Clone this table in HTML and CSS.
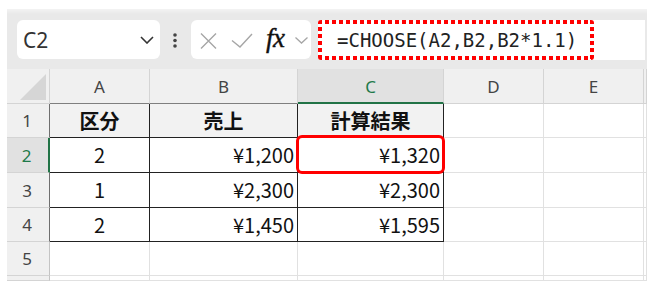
FILE: index.html
```html
<!DOCTYPE html>
<html lang="ja">
<head>
<meta charset="utf-8">
<title>CHOOSE</title>
<link rel="stylesheet" href="styles.css">
</head>
<body>
<div class="app">
  <div class="toolbar">
    <div class="namebox">
      <span class="name">C2</span>
      <svg class="nb-chev" width="14" height="8" viewBox="0 0 14 8"><path d="M1 1 L7 7 L13 1" fill="none" stroke="#333" stroke-width="1.6"/></svg>
    </div>
    <svg class="dots" width="4" height="15" viewBox="0 0 4 15"><circle cx="2" cy="2" r="1.8" fill="#444"/><circle cx="2" cy="7.5" r="1.8" fill="#444"/><circle cx="2" cy="13" r="1.8" fill="#444"/></svg>
    <div class="fxbox">
      <svg class="ic-x" width="17" height="16" viewBox="0 0 17 16"><path d="M1 0.5 L16 15.5 M16 0.5 L1 15.5" fill="none" stroke="#a6a6a6" stroke-width="1.4"/></svg>
      <svg class="ic-check" width="22" height="15" viewBox="0 0 22 15"><path d="M1 7.5 L9 14 L21 1" fill="none" stroke="#a6a6a6" stroke-width="1.4"/></svg>
      <span class="fx">fx</span>
      <svg class="ic-chev" width="13" height="7" viewBox="0 0 13 7"><path d="M0.5 0.5 L6.5 6 L12.5 0.5" fill="none" stroke="#a6a6a6" stroke-width="1.3"/></svg>
    </div>
    <div class="formulabar">
      <span class="formula">=CHOOSE(A2,B2,B2*1.1)</span>
    </div>
  </div>
  <div class="sheet">
    <div class="corner"><span class="tri"></span></div>
    <div class="ch">A</div>
    <div class="ch">B</div>
    <div class="ch sel">C</div>
    <div class="ch light">D</div>
    <div class="ch light">E</div>
    <div class="ch light"></div>

    <div class="rh dark">1</div>
    <div class="c t hd">区分</div>
    <div class="c t hd">売上</div>
    <div class="c t hd">計算結果</div>
    <div class="c"></div>
    <div class="c"></div>
    <div class="c"></div>

    <div class="rh sel">2</div>
    <div class="c t ctr">2</div>
    <div class="c t num">¥1,200</div>
    <div class="c t num">¥1,320</div>
    <div class="c"></div>
    <div class="c"></div>
    <div class="c"></div>

    <div class="rh dark">3</div>
    <div class="c t ctr">1</div>
    <div class="c t num">¥2,300</div>
    <div class="c t num">¥2,300</div>
    <div class="c"></div>
    <div class="c"></div>
    <div class="c"></div>

    <div class="rh dark">4</div>
    <div class="c t ctr">2</div>
    <div class="c t num">¥1,450</div>
    <div class="c t num">¥1,595</div>
    <div class="c"></div>
    <div class="c"></div>
    <div class="c"></div>

    <div class="rh">5</div>
    <div class="c"></div>
    <div class="c"></div>
    <div class="c"></div>
    <div class="c"></div>
    <div class="c"></div>
    <div class="c"></div>

    <div class="rh"></div>
    <div class="c"></div>
    <div class="c"></div>
    <div class="c"></div>
    <div class="c"></div>
    <div class="c"></div>
    <div class="c"></div>

    <div class="highlight"></div>
  </div>
</div>
</body>
</html>
```
FILE: styles.css
```css
* { box-sizing: border-box; }
html, body { margin: 0; padding: 0; background: #fff; }
body { font-family: "Noto Sans", "Noto Sans CJK JP", sans-serif; }

.app {
  margin: 9px 0 0 7px;
  width: 640px;
  height: 272px;
  overflow: hidden;
  background: #e9e9e9;
}

.toolbar {
  height: 60px;
  display: flex;
  align-items: flex-start;
  padding: 11px 2px 0 10px;
  background: linear-gradient(#f3f3f3 0, #e9e9e9 5px);
}

.namebox {
  width: 143px;
  height: 39px;
  background: #fff;
  border-radius: 6px;
  display: flex;
  align-items: center;
  justify-content: space-between;
  padding: 0 6px 0 6px;
}
.name {
  font-family: "Noto Sans", sans-serif;
  font-size: 21px;
  color: #333;
  line-height: 1;
  margin-top: 1px;
}
.nb-chev { display: block; }

.dots { display: block; margin: 13px 0 0 13px; }

.fxbox {
  margin-left: 14px;
  width: 120px;
  height: 39px;
  background: #fff;
  border-radius: 6px;
  display: flex;
  align-items: center;
  padding-left: 9px;
}
.ic-x { display: block; margin-top: 2px; }
.ic-check { display: block; margin-left: 14px; margin-top: 1px; }
.fx {
  margin-left: 13px;
  width: 22px;
  font-family: "Liberation Serif", serif;
  font-style: italic;
  font-size: 27px;
  color: #111;
  line-height: 1;
  margin-top: -2px;
  letter-spacing: -0.5px;
  -webkit-text-stroke: 0.4px #111;
}
.ic-chev { display: block; margin-left: 7px; margin-top: 1px; }

.formulabar {
  margin-left: 7px;
  flex: 1;
  height: 40px;
  background: #fff;
  border-radius: 4px 0 0 4px;
  display: flex;
}
.formula {
  height: 40px;
  display: flex;
  align-items: center;
  padding: 0 17px 0 19px;
  font-family: "DejaVu Sans Mono", "Liberation Mono", monospace;
  font-size: 19px;
  color: #222;
  border-radius: 3px;
  background:
    repeating-linear-gradient(90deg, #f00 0 4px, transparent 4px 7px) left top / 100% 4px no-repeat,
    repeating-linear-gradient(90deg, #f00 0 4px, transparent 4px 7px) left bottom / 100% 4px no-repeat,
    repeating-linear-gradient(180deg, #f00 0 4px, transparent 4px 7px) left top / 4px 100% no-repeat,
    repeating-linear-gradient(180deg, #f00 0 4px, transparent 4px 7px) right top / 4px 100% no-repeat;
}

.sheet {
  position: relative;
  display: grid;
  grid-template-columns: 43px 100px 148px 146px 100px 100px 3px;
  grid-template-rows: 35px 34px 35px 35px 34px 34px 5px;
  background: #fff;
}

.corner {
  background: #f0f0f0;
  border-right: 1px solid #d4d4d4;
  border-bottom: 1px solid #d4d4d4;
  position: relative;
}
.tri {
  position: absolute;
  left: 13px;
  top: 5px;
  width: 26px;
  height: 26px;
  background: #d6d6d6;
  clip-path: polygon(100% 0, 100% 100%, 0 100%);
}

.ch {
  background: #f0f0f0;
  border-right: 1px solid #d4d4d4;
  border-bottom: 1px solid #7f7f7f;
  display: flex;
  align-items: center;
  justify-content: center;
  font-family: "Noto Sans", sans-serif;
  font-size: 17px;
  color: #444;
  padding-top: 1px;
}
.ch.light { border-bottom-color: #d4d4d4; }
.ch.sel {
  background: #e1e1e1;
  color: #1f7a4a;
  border-bottom: 2px solid #217346;
}

.rh {
  background: #f0f0f0;
  border-right: 1px solid #c4c4c4;
  border-bottom: 1px solid #d4d4d4;
  display: flex;
  align-items: center;
  justify-content: center;
  font-family: "Noto Sans", sans-serif;
  font-size: 17px;
  color: #444;
  padding-right: 2px;
}
.rh.dark { border-right-color: #6f6f6f; }
.rh.sel {
  background: #e1e1e1;
  color: #1f7a4a;
  border-right: 2px solid #217346;
}

.c {
  border-right: 1px solid #e1e1e1;
  border-bottom: 1px solid #e1e1e1;
  display: flex;
  align-items: center;
  font-family: "Noto Sans CJK JP", sans-serif;
  font-size: 20px;
  color: #111;
  line-height: 1;
}
.c.t {
  border-right-color: #222;
  border-bottom-color: #222;
}
.c.hd {
  background: #f2f2f2;
  font-weight: 700;
  justify-content: center;
}
.c.ctr { justify-content: center; }
.c.num { justify-content: flex-end; padding-right: 3px; }

.highlight {
  position: absolute;
  left: 289px;
  top: 66px;
  width: 149px;
  height: 39px;
  border: 3px solid #f00;
  border-radius: 6px;
}
```
